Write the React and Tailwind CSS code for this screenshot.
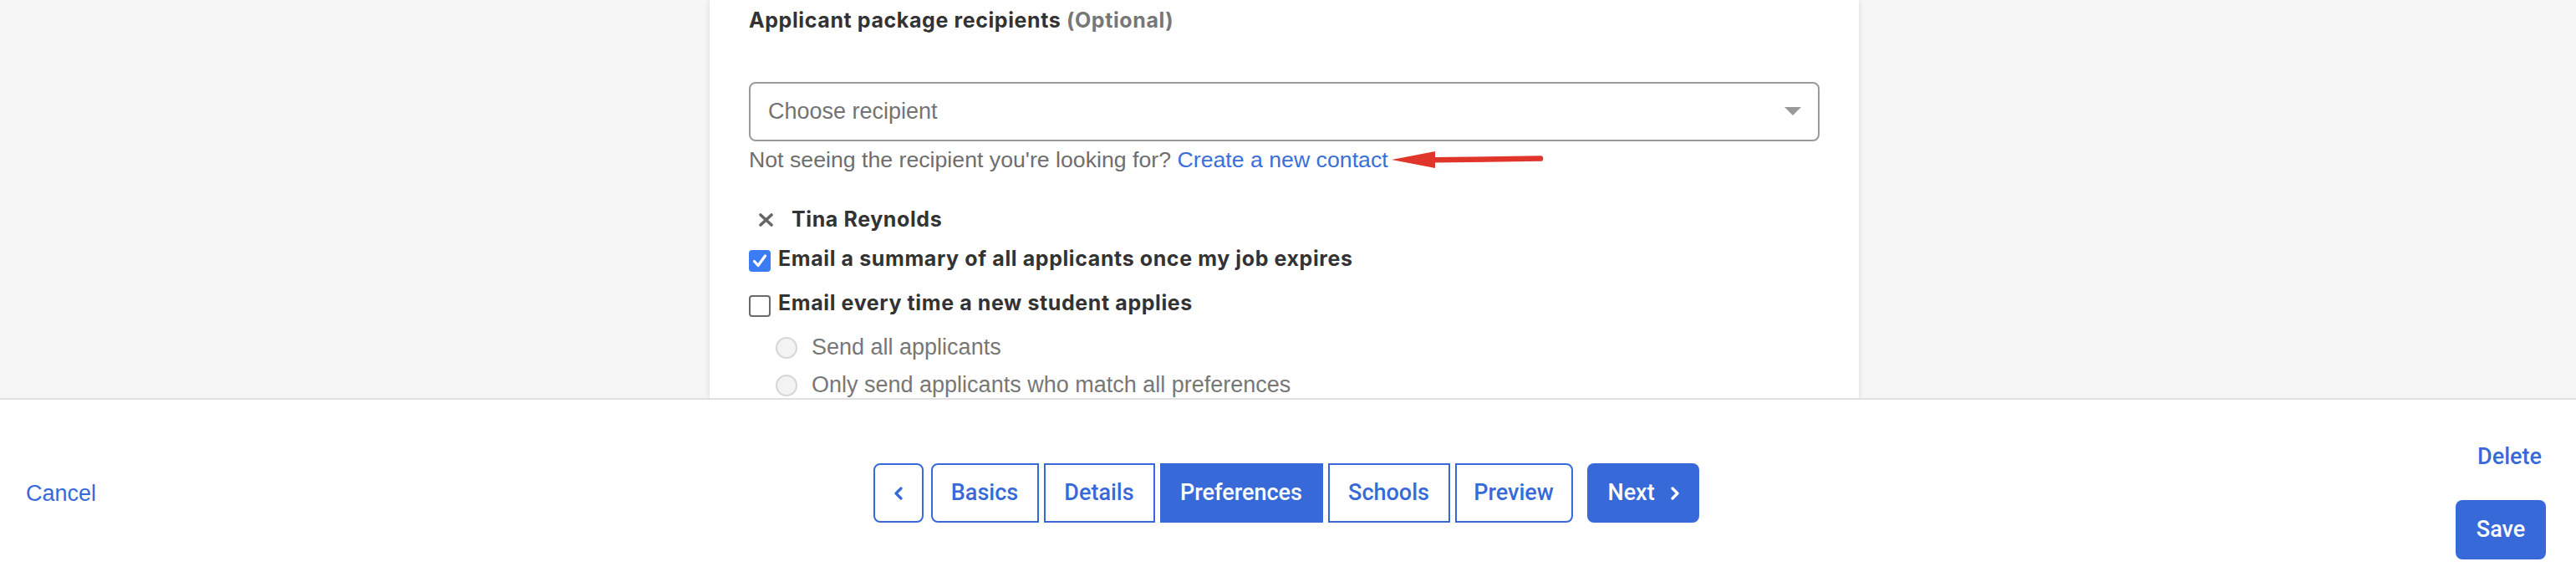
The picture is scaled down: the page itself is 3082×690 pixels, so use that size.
import { useState } from "react";

const steps = [
  { label: "Basics", w: "w-[129px]", shape: "rounded-l-[8px]" },
  { label: "Details", w: "w-[133px]", shape: "" },
  { label: "Preferences", w: "w-[195px]", shape: "", active: true },
  { label: "Schools", w: "w-[146px]", shape: "" },
  { label: "Preview", w: "w-[141px]", shape: "rounded-r-[8px]" },
];

const Chevron = ({ dir = "left", className = "" }) => (
  <svg viewBox="0 0 12 16" className={className} fill="none" stroke="currentColor" strokeWidth="3.2" strokeLinecap="round" strokeLinejoin="round">
    {dir === "left" ? <path d="M9 2L3 8l6 6" /> : <path d="M3 2l6 6-6 6" />}
  </svg>
);

const App = () => {
  const [summary, setSummary] = useState(true);
  const [everyTime, setEveryTime] = useState(false);

  return (
    <div className="h-[690px] w-full overflow-hidden flex flex-col bg-white font-['Liberation_Sans',Arial,sans-serif] text-[#333]">
      {/* ── Scroll area with card ── */}
      <div className="h-[476px] shrink-0 overflow-hidden bg-[#f6f6f6] flex justify-center pr-[9px]">
        <div className="w-[1375px] h-full bg-white shadow-[0_0_7px_rgba(0,0,0,0.13)] px-[47px] pt-[8px]">
          <h3 className="font-['Inter',sans-serif] font-bold text-[25px] tracking-[0.6px] leading-[32px] text-[#333]">
            Applicant package recipients <span className="text-[#777]">(Optional)</span>
          </h3>

          <div className="mt-[58px] h-[71px] w-full border-2 border-[#9a9a9a] rounded-[8px] flex items-center justify-between pl-[21px] pr-[20px]">
            <span className="text-[27px] text-[#737373]">Choose recipient</span>
            <svg viewBox="0 0 20 10" className="w-[20px] h-[10px] mt-[-2px]">
              <path d="M0 0h20L10 10z" fill="#999" />
            </svg>
          </div>

          <div className="mt-[4px] flex items-center text-[26.7px] leading-[36px] text-[#6e6e6e]">
            <span>Not seeing the recipient you're looking for?&nbsp;</span>
            <a href="#" className="text-[#3a6fd9]">Create a new contact</a>
            <svg viewBox="0 0 182 22" className="ml-[4px] w-[182px] h-[22px]">
              <path d="M0 11L52 1v20z" fill="#e0352b" />
              <path d="M50 11.2L178 9.6" stroke="#e0352b" strokeWidth="6.5" strokeLinecap="round" />
            </svg>
          </div>

          <div className="mt-[37px] flex items-center">
            <svg viewBox="0 0 17 16" className="ml-[12px] w-[17px] h-[16px] mt-[2px]">
              <path d="M2 2l13 12M15 2L2 14" stroke="#666" strokeWidth="3.6" strokeLinecap="round" />
            </svg>
            <span className="ml-[22px] font-['Inter',sans-serif] font-bold text-[25px] tracking-[0.6px] leading-[32px]">Tina Reynolds</span>
          </div>

          <label className="mt-[15px] flex items-start cursor-pointer" onClick={() => setSummary(!summary)}>
            {summary ? (
              <span className="mt-[6px] w-[26px] h-[26px] shrink-0 rounded-[4px] bg-[#3b7cf5] flex items-center justify-center">
                <svg viewBox="0 0 26 26" className="w-[26px] h-[26px]">
                  <path d="M6.5 13.5l4.5 5L19.5 7" fill="none" stroke="#fff" strokeWidth="3.2" strokeLinecap="round" strokeLinejoin="round" />
                </svg>
              </span>
            ) : (
              <span className="mt-[6px] w-[26px] h-[26px] shrink-0 rounded-[4px] border-2 border-[#666] bg-white" />
            )}
            <span className="ml-[9px] font-['Inter',sans-serif] font-bold text-[25px] tracking-[0.6px] leading-[32px]">
              Email a summary of all applicants once my job expires
            </span>
          </label>

          <label className="mt-[21px] flex items-start cursor-pointer" onClick={() => setEveryTime(!everyTime)}>
            {everyTime ? (
              <span className="mt-[7px] w-[26px] h-[26px] shrink-0 rounded-[4px] bg-[#3b7cf5]" />
            ) : (
              <span className="mt-[7px] w-[26px] h-[26px] shrink-0 rounded-[4px] border-2 border-[#6a6a6a] bg-white" />
            )}
            <span className="ml-[9px] font-['Inter',sans-serif] font-bold text-[25px] tracking-[0.6px] leading-[32px]">
              Email every time a new student applies
            </span>
          </label>

          <div className="mt-[18px] ml-[32px] flex items-start">
            <span className="mt-[6px] w-[26px] h-[26px] shrink-0 rounded-full border-2 border-[#d6d6d6] bg-[#f3f3f3]" />
            <span className="ml-[17px] text-[27px] leading-[36px] text-[#777]">Send all applicants</span>
          </div>

          <div className="mt-[9px] ml-[32px] flex items-start">
            <span className="mt-[6px] w-[26px] h-[26px] shrink-0 rounded-full border-2 border-[#d6d6d6] bg-[#f3f3f3]" />
            <span className="ml-[17px] text-[27px] leading-[36px] text-[#777]">Only send applicants who match all preferences</span>
          </div>
        </div>
      </div>

      {/* ── Footer ── */}
      <div className="h-[225px] shrink-0 border-t-2 border-[#e0e0e0] grid grid-cols-[1fr_auto_1fr] items-center pl-[31px] pr-[36px]">
        <a href="#" className="justify-self-start text-[27px] leading-[36px] text-[#376ad8]">Cancel</a>

        <div className="flex items-center font-['Roboto',Arial,sans-serif] font-medium">
          <button className="w-[60px] h-[71px] rounded-[8px] border-2 border-[#376ad8] bg-white text-[#376ad8] flex items-center justify-center">
            <Chevron dir="left" className="w-[12px] h-[16px]" />
          </button>
          <div className="ml-[9px] flex gap-[6px]">
            {steps.map((s) => (
              <button
                key={s.label}
                className={`${s.w} ${s.shape} h-[71px] border-2 border-[#376ad8] text-[27px] flex items-center justify-center ${
                  s.active ? "bg-[#376ad8] text-white" : "bg-white text-[#376ad8]"
                }`}
              >
                {s.label}
              </button>
            ))}
          </div>
          <button className="ml-[17px] w-[134px] h-[71px] rounded-[8px] bg-[#376ad8] text-white text-[27px] flex items-center pl-[25px]">
            <span>Next</span>
            <Chevron dir="right" className="ml-[18px] w-[12px] h-[16px]" />
          </button>
        </div>

        <div className="justify-self-end self-start pt-[50px] flex flex-col items-end font-['Roboto',Arial,sans-serif] font-medium">
          <a href="#" className="pr-[5px] text-[27px] leading-[36px] text-[#376ad8]">Delete</a>
          <button className="mt-[34px] w-[108px] h-[71px] rounded-[8px] bg-[#376ad8] text-white text-[27px]">Save</button>
        </div>
      </div>
    </div>
  );
};

export default App;
